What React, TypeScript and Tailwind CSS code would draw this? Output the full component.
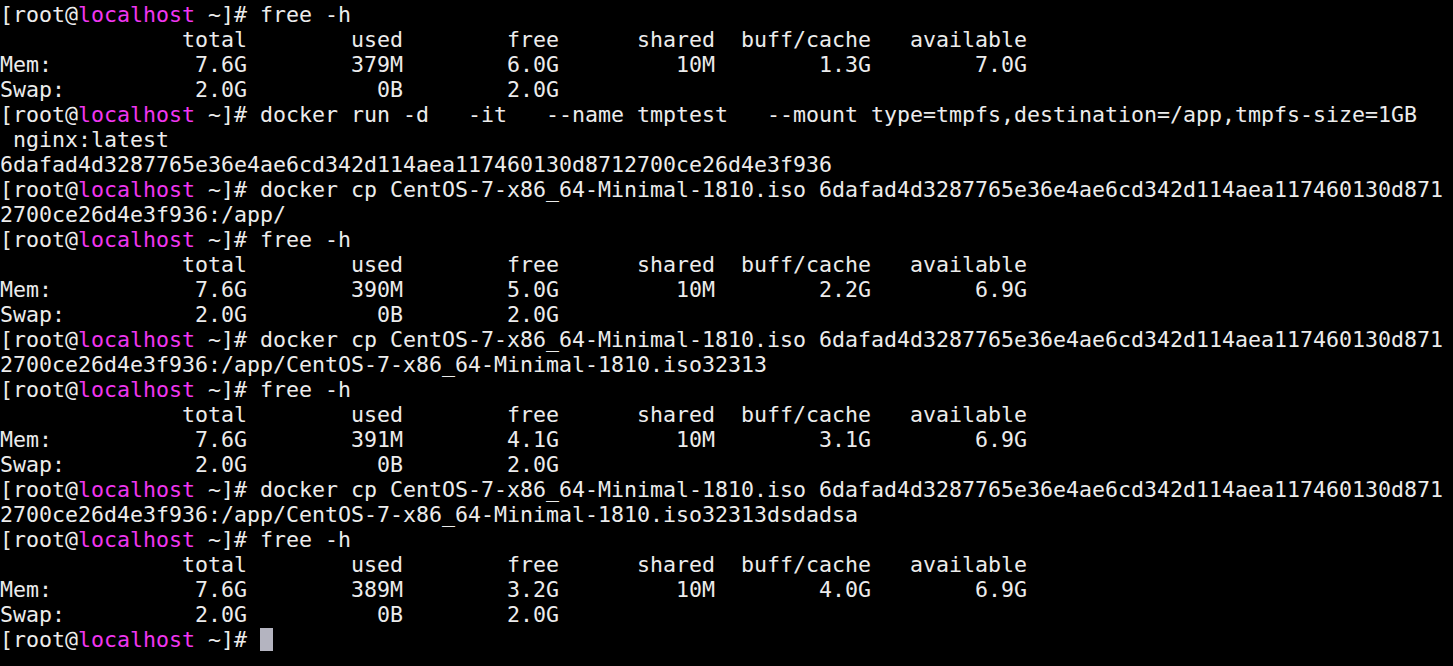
const host = "localhost"

type Line = { prompt?: boolean; text: string }

const row = (label: string, values: string[]) =>
  label.padEnd(7) + values.map((v) => v.padStart(12)).join("")

const freeOut = (mem: string[], swap: string[]): Line[] => [
  { text: "              total        used        free      shared  buff/cache   available" },
  { text: row("Mem:", mem) },
  { text: row("Swap:", swap) },
]

const cpLine = "docker cp CentOS-7-x86_64-Minimal-1810.iso 6dafad4d3287765e36e4ae6cd342d114aea117460130d871"

const lines: Line[] = [
  { prompt: true, text: "free -h" },
  ...freeOut(["7.6G", "379M", "6.0G", "10M", "1.3G", "7.0G"], ["2.0G", "0B", "2.0G"]),
  {
    prompt: true,
    text: "docker run -d   -it   --name tmptest   --mount type=tmpfs,destination=/app,tmpfs-size=1GB",
  },
  { text: " nginx:latest" },
  { text: "6dafad4d3287765e36e4ae6cd342d114aea117460130d8712700ce26d4e3f936" },
  { prompt: true, text: cpLine },
  { text: "2700ce26d4e3f936:/app/" },
  { prompt: true, text: "free -h" },
  ...freeOut(["7.6G", "390M", "5.0G", "10M", "2.2G", "6.9G"], ["2.0G", "0B", "2.0G"]),
  { prompt: true, text: cpLine },
  { text: "2700ce26d4e3f936:/app/CentOS-7-x86_64-Minimal-1810.iso32313" },
  { prompt: true, text: "free -h" },
  ...freeOut(["7.6G", "391M", "4.1G", "10M", "3.1G", "6.9G"], ["2.0G", "0B", "2.0G"]),
  { prompt: true, text: cpLine },
  { text: "2700ce26d4e3f936:/app/CentOS-7-x86_64-Minimal-1810.iso32313dsdadsa" },
  { prompt: true, text: "free -h" },
  ...freeOut(["7.6G", "389M", "3.2G", "10M", "4.0G", "6.9G"], ["2.0G", "0B", "2.0G"]),
]

function Prompt() {
  return (
    <>
      [root@<span className="text-[#f036f0]">{host}</span> ~]#{" "}
    </>
  )
}

export default function App() {
  return (
    <div className="w-[1453px] h-[666px] bg-black overflow-hidden pt-[2px] font-['DejaVu_Sans_Mono',monospace] text-[21.6px] leading-[25px] text-[#ececec] whitespace-pre">
      {lines.map((line, i) => (
        <div key={i} className="h-[25px]">
          {line.prompt && <Prompt />}
          {line.text}
        </div>
      ))}
      <div className="h-[25px] flex items-center">
        <Prompt />
        <span className="inline-block w-[13px] h-[23px] bg-[#b4b4c0]" />
      </div>
    </div>
  )
}
